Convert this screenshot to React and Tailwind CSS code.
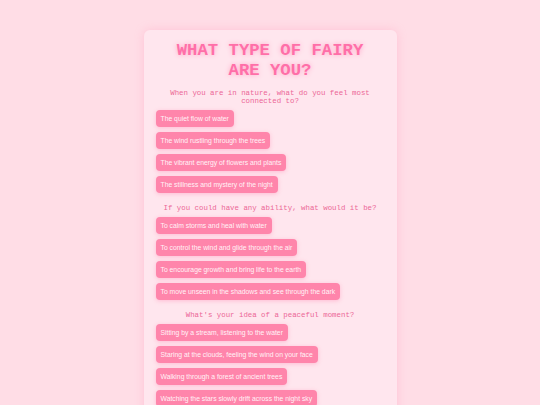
import React from 'react';

const questions = [
  {
    text: 'When you are in nature, what do you feel most connected to?',
    answers: [
      'The quiet flow of water',
      'The wind rustling through the trees',
      'The vibrant energy of flowers and plants',
      'The stillness and mystery of the night',
    ],
  },
  {
    text: 'If you could have any ability, what would it be?',
    answers: [
      'To calm storms and heal with water',
      'To control the wind and glide through the air',
      'To encourage growth and bring life to the earth',
      'To move unseen in the shadows and see through the dark',
    ],
  },
  {
    text: "What's your idea of a peaceful moment?",
    answers: [
      'Sitting by a stream, listening to the water',
      'Staring at the clouds, feeling the wind on your face',
      'Walking through a forest of ancient trees',
      'Watching the stars slowly drift across the night sky',
    ],
  },
];

const mono = { fontFamily: '"Courier New", "Liberation Mono", monospace' };
const sans = { fontFamily: '"Liberation Sans", Arial, sans-serif' };

export default function App() {
  return (
    <div className="min-h-screen bg-[#ffdde6] flex justify-center pt-[30px] overflow-hidden">
      <div className="w-[253px] h-[420px] bg-[#ffe6ee] rounded-[6px] shadow-[0_0_10px_rgba(255,150,185,0.35)] px-[12px] pt-[11px]">
        <h1
          style={mono}
          className="px-[12px] text-center font-bold text-[17.3px] leading-[20px] text-[#ff6fa8] [text-shadow:0_0_5px_#ffa3c6]"
        >
          WHAT TYPE OF FAIRY ARE YOU?
        </h1>

        {questions.map((q, i) => (
          <div key={i} className={i === 0 ? 'mt-[8px]' : 'mt-[11px]'}>
            <p style={mono} className="text-center text-[7.4px] leading-[8px] text-[#ec6797] mb-[5px]">
              {q.text}
            </p>
            <div className="flex flex-col items-start gap-[5px]">
              {q.answers.map((a) => (
                <button
                  key={a}
                  style={sans}
                  className="bg-[#ff85ab] text-[#fff3f7] text-[6.8px] leading-[8px] py-[4.5px] px-[5px] rounded-[4px] shadow-[0_1px_4px_rgba(255,110,160,0.35)]"
                >
                  {a}
                </button>
              ))}
            </div>
          </div>
        ))}
      </div>
    </div>
  );
}
